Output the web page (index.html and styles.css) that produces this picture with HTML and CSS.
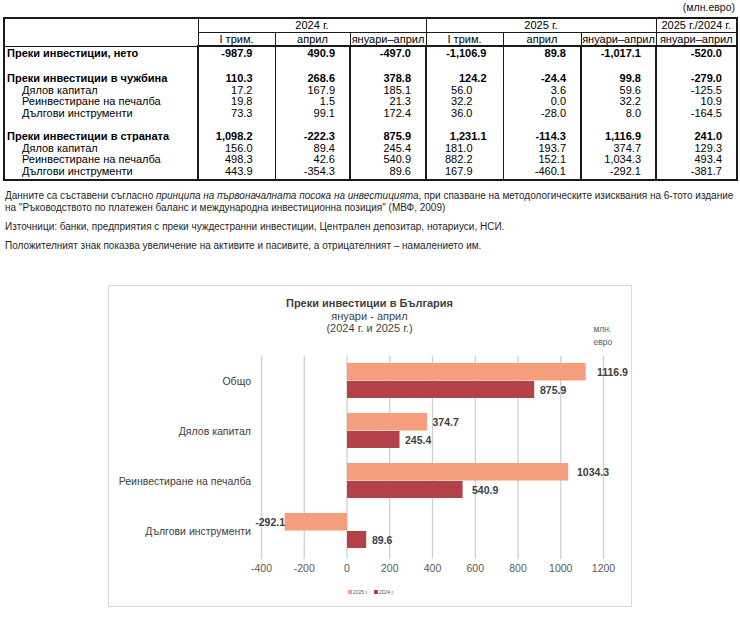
FILE: index.html
```html
<!DOCTYPE html>
<html lang="bg">
<head>
<meta charset="utf-8">
<title>Преки инвестиции</title>
<link rel="stylesheet" href="styles.css">
</head>
<body>
<div class="page">
  <div class="unit">(млн.евро)</div>
  <table class="data">
    <colgroup>
      <col class="c-lbl"><col class="c1"><col class="c2"><col class="c3"><col class="c4"><col class="c5"><col class="c6"><col class="c7">
    </colgroup>
    <thead>
      <tr class="h1">
        <th rowspan="2"></th>
        <th colspan="3">2024 г.</th>
        <th colspan="3">2025 г.</th>
        <th>2025 г./2024 г.</th>
      </tr>
      <tr class="h2">
        <th>I трим.</th><th>април</th><th>януари–април</th>
        <th>I трим.</th><th>април</th><th>януари–април</th>
        <th>януари–април</th>
      </tr>
    </thead>
    <tbody>
      <tr class="tall bold">
        <td class="lbl">Преки инвестиции, нето</td>
        <td class="n k1 tk">-987.9</td><td class="n">490.9</td><td class="n tk">-497.0</td>
        <td class="n k4 tk">-1,106.9</td><td class="n">89.8</td><td class="n tk">-1,017.1</td><td class="n tk">-520.0</td>
      </tr>
      <tr class="tall"><td class="lbl"></td><td class="tk"></td><td></td><td class="tk"></td><td class="tk"></td><td></td><td class="tk"></td><td class="tk"></td></tr>
      <tr class="bold">
        <td class="lbl">Преки инвестиции в чужбина</td>
        <td class="n k1 tk">110.3</td><td class="n">268.6</td><td class="n tk">378.8</td>
        <td class="n k4 tk">124.2</td><td class="n">-24.4</td><td class="n tk">99.8</td><td class="n tk">-279.0</td>
      </tr>
      <tr>
        <td class="lbl sub">Дялов капитал</td>
        <td class="n k1 tk">17.2</td><td class="n">167.9</td><td class="n tk">185.1</td>
        <td class="n k4n tk">56.0</td><td class="n">3.6</td><td class="n tk">59.6</td><td class="n tk">-125.5</td>
      </tr>
      <tr>
        <td class="lbl sub">Реинвестиране на печалба</td>
        <td class="n k1 tk">19.8</td><td class="n">1.5</td><td class="n tk">21.3</td>
        <td class="n k4n tk">32.2</td><td class="n">0.0</td><td class="n tk">32.2</td><td class="n tk">10.9</td>
      </tr>
      <tr>
        <td class="lbl sub">Дългови инструменти</td>
        <td class="n k1 tk">73.3</td><td class="n">99.1</td><td class="n tk">172.4</td>
        <td class="n k4n tk">36.0</td><td class="n">-28.0</td><td class="n tk">8.0</td><td class="n tk">-164.5</td>
      </tr>
      <tr><td class="lbl"></td><td class="tk"></td><td></td><td class="tk"></td><td class="tk"></td><td></td><td class="tk"></td><td class="tk"></td></tr>
      <tr class="bold">
        <td class="lbl">Преки инвестиции в страната</td>
        <td class="n k1 tk">1,098.2</td><td class="n">-222.3</td><td class="n tk">875.9</td>
        <td class="n k4 tk">1,231.1</td><td class="n">-114.3</td><td class="n tk">1,116.9</td><td class="n tk">241.0</td>
      </tr>
      <tr>
        <td class="lbl sub">Дялов капитал</td>
        <td class="n k1 tk">156.0</td><td class="n">89.4</td><td class="n tk">245.4</td>
        <td class="n k4n tk">181.0</td><td class="n">193.7</td><td class="n tk">374.7</td><td class="n tk">129.3</td>
      </tr>
      <tr>
        <td class="lbl sub">Реинвестиране на печалба</td>
        <td class="n k1 tk">498.3</td><td class="n">42.6</td><td class="n tk">540.9</td>
        <td class="n k4n tk">882.2</td><td class="n">152.1</td><td class="n tk">1,034.3</td><td class="n tk">493.4</td>
      </tr>
      <tr class="last">
        <td class="lbl sub">Дългови инструменти</td>
        <td class="n k1 tk">443.9</td><td class="n">-354.3</td><td class="n tk">89.6</td>
        <td class="n k4n tk">167.9</td><td class="n">-460.1</td><td class="n tk">-292.1</td><td class="n tk">-381.7</td>
      </tr>
    </tbody>
  </table>

  <div class="notes">
    <p class="nw">Данните са съставени съгласно <i>принципа на първоначалната посока на инвестицията</i>, при спазване на методологическите изисквания на 6-тото издание<br>на "Ръководството по платежен баланс и международна инвестиционна позиция" (МВФ, 2009)</p>
    <p>Източници: банки, предприятия с преки чуждестранни инвестиции, Централен депозитар, нотариуси, НСИ.</p>
    <p>Положителният знак показва увеличение на активите и пасивите, а отрицателният – намалението им.</p>
  </div>

  <div class="chart">
    <div class="chart-title">
      <div class="t-main">Преки инвестиции в България</div>
      <div>януари - април</div>
      <div>(2024 г. и 2025 г.)</div>
    </div>
    <div class="chart-unit">млн.<br>евро</div>
    <svg class="plot" width="522" height="245" viewBox="0 0 522 245">
      <g class="grid">
        <line x1="152.5" y1="21" x2="152.5" y2="224"/>
        <line x1="195.25" y1="21" x2="195.25" y2="224"/>
        <line x1="238" y1="21" x2="238" y2="224"/>
        <line x1="280.75" y1="21" x2="280.75" y2="224"/>
        <line x1="323.5" y1="21" x2="323.5" y2="224"/>
        <line x1="366.25" y1="21" x2="366.25" y2="224"/>
        <line x1="409" y1="21" x2="409" y2="224"/>
        <line x1="451.75" y1="21" x2="451.75" y2="224"/>
        <line x1="494.5" y1="21" x2="494.5" y2="224"/>
      </g>
      <g class="bars">
        <rect class="b25" x="238" y="28" width="238.7" height="17.5"/>
        <rect class="b24" x="238" y="46" width="187.2" height="17"/>
        <rect class="b25" x="238" y="78" width="80.1" height="17.5"/>
        <rect class="b24" x="238" y="96" width="52.5" height="17"/>
        <rect class="b25" x="238" y="128" width="221.1" height="17.5"/>
        <rect class="b24" x="238" y="146" width="115.6" height="17"/>
        <rect class="b25" x="175.6" y="178" width="62.4" height="17.5"/>
        <rect class="b24" x="238" y="196" width="19.2" height="17"/>
      </g>
      <g class="cat">
        <text x="142" y="46">Общо</text>
        <text x="142" y="96">Дялов капитал</text>
        <text x="142" y="146">Реинвестиране на печалба</text>
        <text x="142" y="196">Дългови инструменти</text>
      </g>
      <g class="val">
        <text x="488" y="36.75">1116.9</text>
        <text x="431" y="54.5">875.9</text>
        <text x="323.5" y="86.75">374.7</text>
        <text x="296" y="104.5">245.4</text>
        <text x="468" y="136.75">1034.3</text>
        <text x="363" y="154.5">540.9</text>
        <text class="neg" x="176" y="186.75">-292.1</text>
        <text x="263" y="204.5">89.6</text>
      </g>
      <g class="axis">
        <text x="152.5" y="233">-400</text>
        <text x="195.25" y="233">-200</text>
        <text x="238" y="233">0</text>
        <text x="280.75" y="233">200</text>
        <text x="323.5" y="233">400</text>
        <text x="366.25" y="233">600</text>
        <text x="409" y="233">800</text>
        <text x="451.75" y="233">1000</text>
        <text x="494.5" y="233">1200</text>
      </g>
    </svg>
    <div class="legend">
      <span class="lg"><span class="sw sw25"></span>2025 г.</span>
      <span class="lg"><span class="sw sw24"></span>2024 г.</span>
    </div>
  </div>
</div>
</body>
</html>
```

FILE: styles.css
```css
body {
  margin: 0;
  background: #fff;
  color: #000;
  font-family: "Liberation Sans", Arial, sans-serif;
}

.page {
  width: 733px;
  padding: 0 4px 0 3px;
}

.unit {
  text-align: right;
  font-size: 10.5px;
  line-height: 13px;
  padding: 1px 1px 0 0;
  margin-bottom: 3px;
  color: #111;
}

/* ---------- table ---------- */
.data {
  width: 733px;
  table-layout: fixed;
  border-collapse: collapse;
  border: 2px solid #1a1a1a;
  font-size: 11px;
}

.c-lbl { width: 194px; }
.c1 { width: 77px; }
.c2 { width: 75px; }
.c3 { width: 76px; }
.c4 { width: 77px; }
.c5 { width: 78px; }
.c6 { width: 75px; }
.c7 { width: 81px; }

.data th {
  font-weight: normal;
  border: 1px solid #1a1a1a;
  padding: 0;
  text-align: center;
  white-space: nowrap;
}

.data .h1 th {
  height: 13px;
  line-height: 13px;
}

.data .h2 th {
  height: 12px;
  line-height: 12px;
  border-bottom: 2px solid #1a1a1a;
}

.data td {
  border-left: 1px solid #1a1a1a;
  border-right: 1px solid #1a1a1a;
  padding: 0;
  height: 11.6px;
  line-height: 11.6px;
  white-space: nowrap;
}

.data td.tk {
  border-left: 2px solid #1a1a1a;
}

.data tr.tall td {
  height: 13px;
  line-height: 13px;
}

.data tr.last td {
  padding-bottom: 2px;
}

.data .bold td {
  font-weight: bold;
}

.data .lbl {
  padding-left: 2px;
}

.data .lbl.sub {
  padding-left: 17px;
}

.data .n {
  text-align: right;
  padding-right: 14px;
}

.data .n.k1 { padding-right: 22px; }
.data .n.k4 { padding-right: 16px; }
.data .n.k4n { padding-right: 30px; }

/* ---------- notes ---------- */
.notes {
  margin-top: 9px;
  padding-left: 2px;
  font-size: 10px;
  line-height: 12px;
  color: #1f1f1f;
}

.notes p {
  margin: 0 0 7px;
}

.notes .nw {
  white-space: nowrap;
}

/* ---------- chart ---------- */
.chart {
  position: relative;
  width: 524px;
  height: 322px;
  box-sizing: border-box;
  margin: 33px auto 0;
  border: 1px solid #d9d9d9;
  color: #404040;
}

.chart-title {
  padding-top: 11px;
  text-align: center;
  font-size: 11px;
  line-height: 12.5px;
  color: #3f3f3f;
}

.t-main {
  font-weight: bold;
}

.chart-unit {
  position: absolute;
  left: 485px;
  top: 37px;
  font-size: 8.5px;
  line-height: 13px;
  color: #595959;
}

.plot {
  display: block;
}

.grid line {
  stroke: #cfcfcf;
  stroke-width: 1.3;
}

.b25 { fill: #f49e7e; }
.b24 { fill: #b3414a; }

.cat text {
  font-family: "Liberation Sans", Arial, sans-serif;
  font-size: 10.5px;
  fill: #404040;
  text-anchor: end;
  dominant-baseline: central;
}

.val text {
  font-family: "Liberation Sans Narrow", "Arial Narrow", "Liberation Sans", sans-serif;
  font-stretch: condensed;
  font-weight: bold;
  font-size: 10.5px;
  fill: #404040;
  dominant-baseline: central;
}

.val text.neg {
  text-anchor: end;
}

.axis text {
  font-family: "Liberation Sans Narrow", "Arial Narrow", "Liberation Sans", sans-serif;
  font-stretch: condensed;
  font-size: 10.5px;
  fill: #595959;
  text-anchor: middle;
  dominant-baseline: central;
}

.legend {
  display: flex;
  justify-content: center;
  gap: 6px;
  margin-top: 8px;
  padding-left: 3px;
  font-size: 5px;
  line-height: 8px;
  color: #595959;
}

.lg {
  display: flex;
  align-items: center;
  gap: 1px;
}

.sw {
  display: inline-block;
  width: 4px;
  height: 4px;
}

.sw25 { background: #f49e7e; }
.sw24 { background: #b3414a; }
```
